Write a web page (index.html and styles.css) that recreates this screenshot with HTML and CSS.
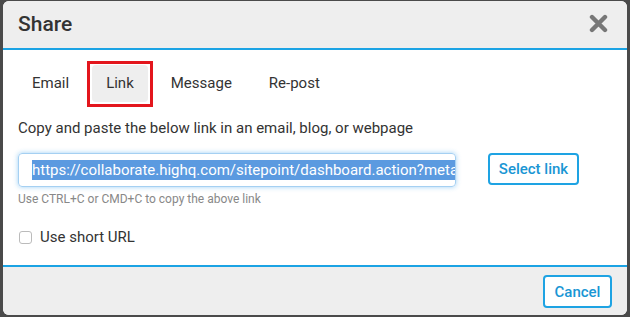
FILE: index.html
```html
<!DOCTYPE html>
<html lang="en">
<head>
    <meta charset="UTF-8">
    <title>Share</title>
    <link rel="stylesheet" href="styles.css">
</head>
<body>
    <div class="dialog">
        <div class="dialog-header">
            <h2>Share</h2>
            <span class="close">
                <svg width="19" height="19" viewBox="0 0 19 19">
                    <path d="M3 3 L16 16 M16 3 L3 16" stroke="#777" stroke-width="4.4" stroke-linecap="round"/>
                </svg>
            </span>
        </div>

        <div class="dialog-body">
            <ul class="tabs">
                <li class="tab">Email</li>
                <li class="tab active">Link</li>
                <li class="tab">Message</li>
                <li class="tab">Re-post</li>
            </ul>

            <p class="intro">Copy and paste the below link in an email, blog, or webpage</p>

            <div class="link-row">
                <div class="link-input"><span class="selected">https://collaborate.highq.com/sitepoint/dashboard.action?meta</span></div>
                <button class="btn select-btn">Select link</button>
            </div>
            <p class="hint">Use CTRL+C or CMD+C to copy the above link</p>

            <label class="check">
                <span class="box"></span>
                Use short URL
            </label>
        </div>

        <div class="dialog-footer">
            <button class="btn">Cancel</button>
        </div>
    </div>
</body>
</html>
```

FILE: styles.css
```css
/* Global Styles */

* {
    margin: 0;
    padding: 0;
    box-sizing: border-box;
}

body {
    font-family: Roboto, 'Liberation Sans', sans-serif;
    background-color: #4a4a4a;
    color: #333;
    padding: 1px 3px 0 3px;
}

/* Dialog */

.dialog {
    width: 624px;
    height: 314px;
    background-color: #fff;
    border-radius: 6px;
    overflow: hidden;
    display: flex;
    flex-direction: column;
}

.dialog-header {
    height: 49px;
    background-color: #eeeeee;
    border-bottom: 2px solid #1ba3e4;
    display: flex;
    align-items: center;
    justify-content: space-between;
    padding: 0 19px 2px 15px;
}

.dialog-header h2 {
    font-size: 21px;
    font-weight: 500;
    color: #333;
}

.close {
    display: flex;
}

/* Body */

.dialog-body {
    flex: 1;
    padding: 15px 15px 0 15px;
}

.tabs {
    list-style: none;
    display: flex;
    gap: 9px;
}

.tab {
    position: relative;
    font-size: 15px;
    height: 37px;
    line-height: 37px;
    padding: 0 14px;
    border-radius: 4px;
    color: #333;
}

.tab.active {
    background-color: #eeeeee;
}

/* red highlight box drawn over the active tab */
.tab.active::after {
    content: "";
    position: absolute;
    top: -4px;
    left: -5px;
    right: -5px;
    bottom: -5px;
    border: 3px solid #e3161d;
}

.intro {
    font-size: 15px;
    margin-top: 17px;
    line-height: 18px;
}

.link-row {
    display: flex;
    align-items: flex-start;
    gap: 32px;
    margin-top: 16px;
}

.link-input {
    width: 438px;
    height: 34px;
    border: 1px solid #a5d0f2;
    border-radius: 4px;
    box-shadow: 0 0 5px rgba(40, 150, 230, 0.45);
    padding: 0 0 0 13px;
    white-space: nowrap;
    overflow: hidden;
    font-size: 15px;
    line-height: 32px;
}

.selected {
    background-color: #5b9ae0;
    color: #fff;
    padding: 1px 0;
}

.btn {
    font-family: Roboto, 'Liberation Sans', sans-serif;
    font-size: 15px;
    font-weight: 500;
    color: #1996d4;
    background-color: #fff;
    border: 2px solid #1ea3e3;
    border-radius: 4px;
    height: 32px;
    padding: 0;
    cursor: pointer;
}

.select-btn {
    width: 91px;
}

.hint {
    font-size: 12px;
    color: #888;
    margin-top: 5px;
    line-height: 14px;
}

.check {
    display: flex;
    align-items: center;
    gap: 8px;
    font-size: 15px;
    margin: 22px 0 0 1px;
}

.box {
    width: 13px;
    height: 13px;
    border: 1px solid #bbb;
    border-radius: 3px;
    background-color: #fff;
}

/* Footer */

.dialog-footer {
    height: 50px;
    background-color: #eeeeee;
    border-top: 2px solid #1ba3e4;
    display: flex;
    justify-content: flex-end;
    align-items: flex-start;
    padding: 8px 15px 0 0;
}

.dialog-footer .btn {
    height: 33px;
    width: 69px;
}
```
